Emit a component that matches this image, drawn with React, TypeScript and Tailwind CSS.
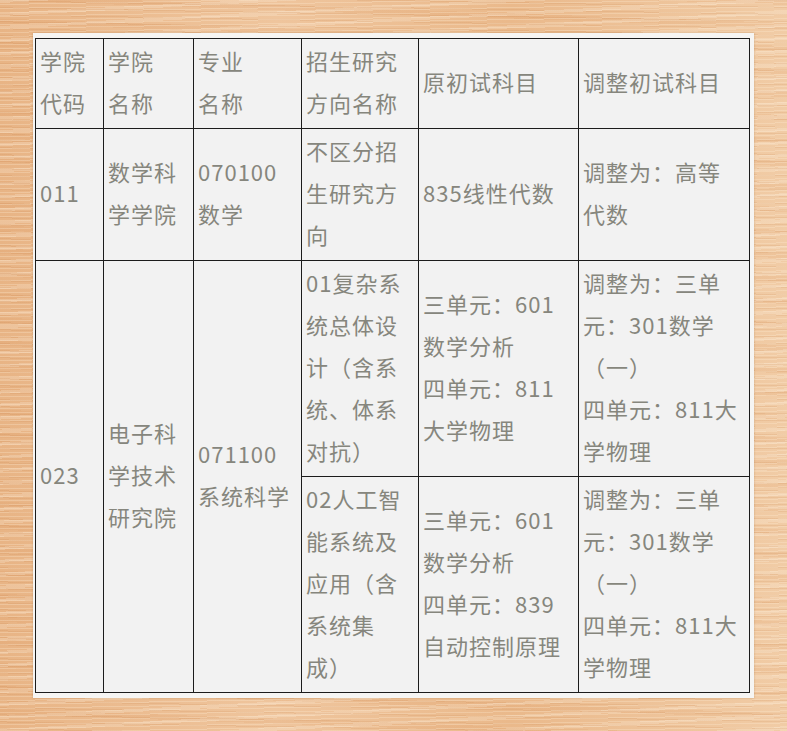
const cell = "border border-[#1c1c1c] px-[4px] pt-[3px] pb-[2px] align-middle whitespace-nowrap";

function Lines({ lines }: { lines: string[] }) {
  return (
    <div className="-translate-y-[3px]">
      {lines.map((l, i) => (
        <div key={i}>{l}</div>
      ))}
    </div>
  );
}

export default function App() {
  return (
    <div className="h-[731px] w-full overflow-hidden bg-[#ecbd90] bg-[image:repeating-linear-gradient(179deg,rgba(255,238,215,0.28)_0px,rgba(255,238,215,0.28)_1px,transparent_1px,transparent_4px),repeating-linear-gradient(181deg,rgba(190,115,55,0.13)_0px,rgba(190,115,55,0.13)_1px,transparent_1px,transparent_7px),repeating-linear-gradient(177deg,rgba(255,246,232,0.22)_0px,rgba(255,246,232,0.22)_3px,transparent_3px,transparent_13px),repeating-linear-gradient(182deg,rgba(215,140,80,0.12)_0px,rgba(215,140,80,0.12)_5px,transparent_5px,transparent_23px),linear-gradient(90deg,#e8b485,#efc59d_35%,#eab98b_65%,#f1cca6)] pl-[33px] pt-[33px]">
      <div className="inline-block bg-[#f6f5f3] pb-[5px] pl-[2px] pr-[4px] pt-[5px] shadow-[0_0_2px_rgba(120,80,40,0.3)]">
        <table className="table-fixed border-collapse bg-[#f2f2f2] text-[22px] leading-[42px] tracking-[1px] text-[#86867d] [font-family:'Noto_Sans_CJK_SC','Noto_Sans',sans-serif]">
          <colgroup>
            <col className="w-[68px]" />
            <col className="w-[90px]" />
            <col className="w-[108px]" />
            <col className="w-[117px]" />
            <col className="w-[160px]" />
            <col className="w-[171px]" />
          </colgroup>
          <tbody>
            <tr>
              <td className={cell}><Lines lines={["学院", "代码"]} /></td>
              <td className={cell}><Lines lines={["学院", "名称"]} /></td>
              <td className={cell}><Lines lines={["专业", "名称"]} /></td>
              <td className={cell}><Lines lines={["招生研究", "方向名称"]} /></td>
              <td className={cell}><Lines lines={["原初试科目"]} /></td>
              <td className={cell}><Lines lines={["调整初试科目"]} /></td>
            </tr>
            <tr>
              <td className={cell}><Lines lines={["011"]} /></td>
              <td className={cell}><Lines lines={["数学科", "学学院"]} /></td>
              <td className={cell}><Lines lines={["070100", "数学"]} /></td>
              <td className={cell}><Lines lines={["不区分招", "生研究方", "向"]} /></td>
              <td className={cell}><Lines lines={["835线性代数"]} /></td>
              <td className={cell}><Lines lines={["调整为：高等", "代数"]} /></td>
            </tr>
            <tr>
              <td className={cell} rowSpan={2}><Lines lines={["023"]} /></td>
              <td className={cell} rowSpan={2}><Lines lines={["电子科", "学技术", "研究院"]} /></td>
              <td className={cell} rowSpan={2}><Lines lines={["071100", "系统科学"]} /></td>
              <td className={cell}><Lines lines={["01复杂系", "统总体设", "计（含系", "统、体系", "对抗）"]} /></td>
              <td className={cell}><Lines lines={["三单元：601", "数学分析", "四单元：811", "大学物理"]} /></td>
              <td className={cell}><Lines lines={["调整为：三单", "元：301数学", "（一）", "四单元：811大", "学物理"]} /></td>
            </tr>
            <tr>
              <td className={cell}><Lines lines={["02人工智", "能系统及", "应用（含", "系统集", "成）"]} /></td>
              <td className={cell}><Lines lines={["三单元：601", "数学分析", "四单元：839", "自动控制原理"]} /></td>
              <td className={cell}><Lines lines={["调整为：三单", "元：301数学", "（一）", "四单元：811大", "学物理"]} /></td>
            </tr>
          </tbody>
        </table>
      </div>
    </div>
  );
}
